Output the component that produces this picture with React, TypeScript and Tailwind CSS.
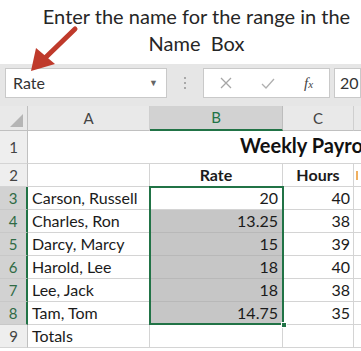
const rows = [
  { n: 3, name: 'Carson, Russell', rate: '20', hours: '40' },
  { n: 4, name: 'Charles, Ron', rate: '13.25', hours: '38' },
  { n: 5, name: 'Darcy, Marcy', rate: '15', hours: '39' },
  { n: 6, name: 'Harold, Lee', rate: '18', hours: '40' },
  { n: 7, name: 'Lee, Jack', rate: '18', hours: '38' },
  { n: 8, name: 'Tam, Tom', rate: '14.75', hours: '35' },
];

function RowHead({ n, selected }: { n: number; selected?: boolean }) {
  return (
    <div
      className={
        selected
          ? 'w-[28px] shrink-0 flex items-center justify-center bg-[#d2d2d2] text-[#2f6b45] border-r-2 border-r-[#217346] border-b border-b-[#c8c8c8]'
          : 'w-[28px] shrink-0 flex items-center justify-center bg-[#eeeeee] text-[#444] border-r border-r-[#c0c0c0] border-b border-b-[#d4d4d4]'
      }
    >
      {n}
    </div>
  );
}

export default function App() {
  return (
    <div className="relative w-[361px] h-[351px] overflow-hidden bg-white font-['Lato',sans-serif] text-[#1b1b1b]">
      {/* caption */}
      <div className="h-[64px] flex flex-col items-center pt-[3px] pl-[32px] text-[20px] leading-[27px] text-[#262626] whitespace-nowrap">
        <div>Enter the name for the range in the</div>
        <div>Name&nbsp; Box</div>
      </div>

      {/* formula bar */}
      <div className="h-[42px] bg-[#e6e6e6] flex items-start pt-[4px] pl-[5px]">
        <div className="w-[162px] h-[30px] bg-white border border-[#c9c9c9] flex items-center justify-between pl-[7px] pr-[8px] text-[16px] text-[#333]">
          <span>Rate</span>
          <span className="text-[9px] text-[#666]">▼</span>
        </div>
        <div className="w-[36px] h-[30px] flex flex-col items-center justify-center gap-[3px]">
          <span className="w-[2px] h-[2px] bg-[#a8a8a8]" />
          <span className="w-[2px] h-[2px] bg-[#a8a8a8]" />
          <span className="w-[2px] h-[2px] bg-[#a8a8a8]" />
        </div>
        <div className="w-[127px] h-[30px] bg-white border border-[#c9c9c9] flex items-center">
          <svg width="80" height="30" viewBox="0 0 80 30" className="shrink-0">
            <path d="M17 10 L27 20 M27 10 L17 20" stroke="#a6a6a6" strokeWidth="1.3" fill="none" />
            <path d="M58 16 L62 20 L70 11" stroke="#b0b0b0" strokeWidth="1.3" fill="none" />
          </svg>
          <span className="ml-[20px] font-['Liberation_Serif',serif] italic text-[15px] text-[#444]">
            f<span className="text-[11px]">x</span>
          </span>
        </div>
        <div className="ml-[4px] flex-1 h-[30px] bg-white border border-[#c9c9c9] flex items-center pl-[5px] text-[16px] text-[#333]">
          20
        </div>
      </div>

      {/* column headers */}
      <div className="flex h-[25px] text-[15px] bg-[#e9e9e9]">
        <div className="w-[28px] shrink-0 relative border-r border-r-[#c0c0c0] border-b border-b-[#c0c0c0]">
          <svg width="14" height="13" viewBox="0 0 14 13" className="absolute right-[3px] bottom-[3px]">
            <path d="M13 0 L13 13 L0 13 Z" fill="#b5b5b5" />
          </svg>
        </div>
        <div className="w-[122px] shrink-0 flex items-center justify-center text-[#444] border-r border-r-[#cfcfcf] border-b border-b-[#c0c0c0]">A</div>
        <div className="w-[133px] shrink-0 flex items-center justify-center bg-[#d2d2d2] text-[#217346] border-r border-r-[#bdbdbd] border-b-2 border-b-[#217346]">B</div>
        <div className="w-[71px] shrink-0 flex items-center justify-center text-[#444] border-r border-r-[#cfcfcf] border-b border-b-[#c0c0c0]">C</div>
        <div className="w-[40px] shrink-0 border-b border-b-[#c0c0c0]" />
      </div>

      {/* row 1 */}
      <div className="flex h-[33px] text-[15px]">
        <RowHead n={1} />
        <div className="flex-1 flex items-end pb-[3px] pl-[212px] border-b border-b-[#d4d4d4] whitespace-nowrap text-[20px] font-bold text-[#111]">
          Weekly Payroll
        </div>
      </div>

      {/* row 2 */}
      <div className="flex h-[23px] text-[15px]">
        <RowHead n={2} />
        <div className="w-[122px] shrink-0 border-r border-b border-[#d4d4d4]" />
        <div className="w-[133px] shrink-0 flex items-center justify-center font-bold text-[16px] border-r border-b border-[#d4d4d4]">Rate</div>
        <div className="w-[71px] shrink-0 flex items-center justify-center font-bold text-[16px] border-r border-b border-[#d4d4d4]">Hours</div>
        <div className="w-[40px] shrink-0 flex items-center border-b border-[#d4d4d4] pl-[2px]">
          <span className="w-[2px] h-[9px] bg-[#f0b060]" />
        </div>
      </div>

      {rows.map((r) => (
        <div key={r.n} className="flex h-[23px] text-[15px]">
          <RowHead n={r.n} selected />
          <div className="w-[122px] shrink-0 flex items-center pl-[4px] text-[16px] border-r border-b border-[#d4d4d4]">{r.name}</div>
          <div
            className={
              r.n === 3
                ? 'w-[133px] shrink-0 flex items-center justify-end pr-[4px] text-[16px] border-r border-b border-[#d4d4d4] bg-white'
                : 'w-[133px] shrink-0 flex items-center justify-end pr-[4px] text-[16px] border-r border-b border-[#b8b8b8] bg-[#c6c6c6]'
            }
          >
            {r.rate}
          </div>
          <div className="w-[71px] shrink-0 flex items-center justify-end pr-[3px] text-[16px] border-r border-b border-[#d4d4d4]">{r.hours}</div>
          <div className="w-[40px] shrink-0 border-b border-[#d4d4d4]" />
        </div>
      ))}

      {/* row 9 */}
      <div className="flex h-[23px] text-[15px]">
        <RowHead n={9} />
        <div className="w-[122px] shrink-0 flex items-center pl-[4px] text-[16px] border-r border-b border-[#d4d4d4]">Totals</div>
        <div className="w-[133px] shrink-0 border-r border-b border-[#d4d4d4]" />
        <div className="w-[71px] shrink-0 border-r border-b border-[#d4d4d4]" />
        <div className="w-[40px] shrink-0 border-b border-[#d4d4d4]" />
      </div>

      {/* selection outline B3:B8 */}
      <div className="absolute left-[149px] top-[186px] w-[135px] h-[139px] border-2 border-[#217346] pointer-events-none" />
      <div className="absolute left-[281px] top-[322px] w-[6px] h-[6px] bg-[#217346] border border-white" />

      {/* red arrow */}
      <svg width="90" height="80" viewBox="0 0 90 80" className="absolute left-0 top-0">
        <path d="M75 29 L44 59" stroke="#bf3a2b" strokeWidth="5" strokeLinecap="round" />
        <path d="M31 71 L36 48 L55 64 Z" fill="#bf3a2b" />
      </svg>
    </div>
  );
}
